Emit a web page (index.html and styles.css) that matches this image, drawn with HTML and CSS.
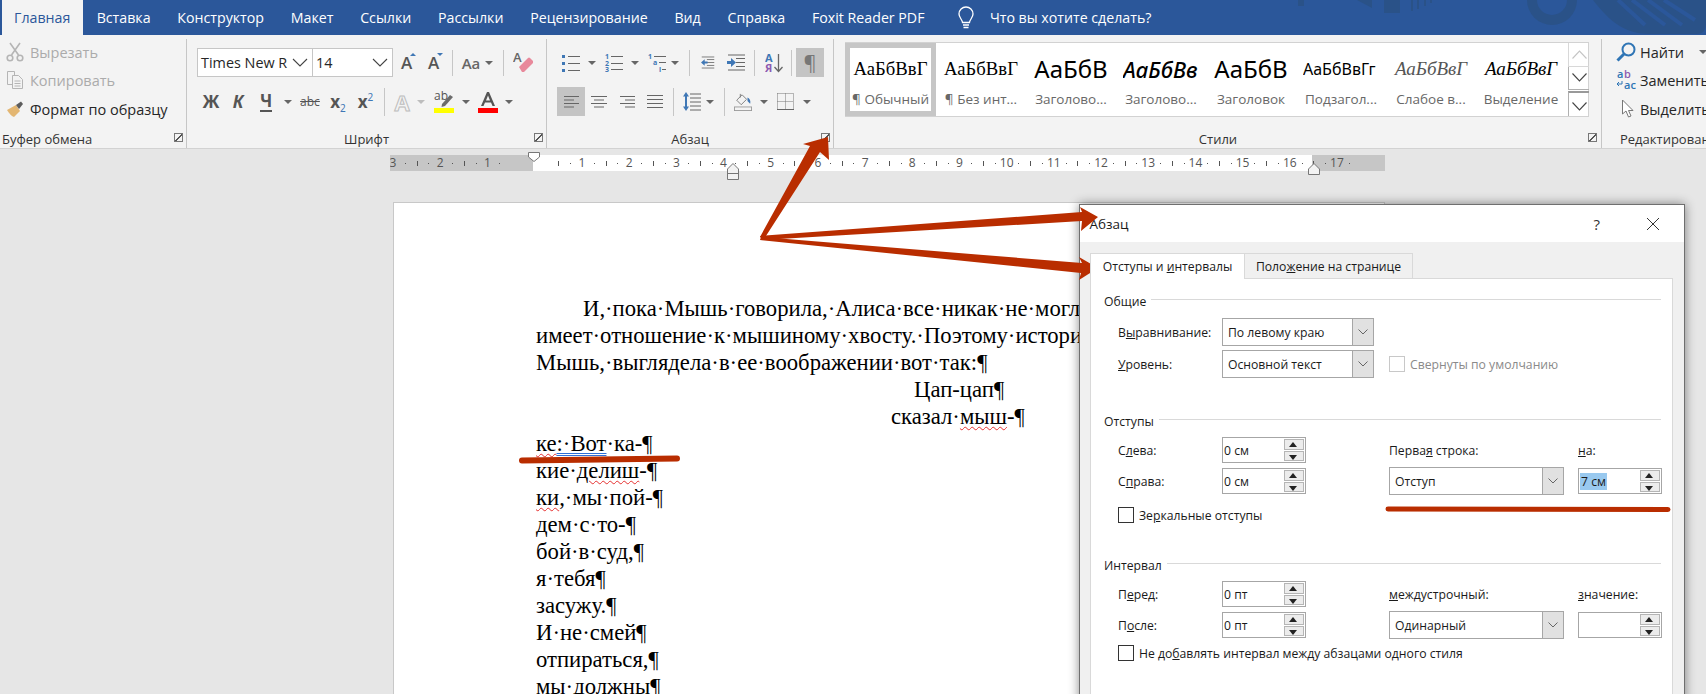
FILE: index.html
```html
<!DOCTYPE html>
<html lang="ru">
<head>
<meta charset="utf-8">
<title>Абзац</title>
<link rel="stylesheet" href="styles.css">
</head>
<body>
<header class="titlebar">
  <svg class="decor" width="416" height="35" viewBox="1290 0 416 35">
    <g fill="#2a5288">
      <rect x="1298" y="0" width="6" height="6"/>
      <path d="M1357 0H1372V8Z"/>
      <rect x="1384" y="0" width="16" height="13"/>
      <rect x="1411" y="0" width="2" height="11"/><rect x="1417" y="0" width="2" height="9"/><rect x="1424" y="0" width="2" height="6"/><rect x="1430" y="0" width="2" height="3"/>
      <path d="M1527 0A25 25 0 0 0 1577 0H1567A15 15 0 0 1 1537 0Z"/>
      <path d="M1593 0C1610 22 1625 34 1650 34H1696Q1706 34 1706 24V0Z"/>
    </g>
    <g stroke="#2b579a" stroke-width="4" fill="none">
      <path d="M1618 0L1645 25"/><path d="M1632 0L1665 25"/><path d="M1648 0L1682 25"/><path d="M1664 0L1695 20"/>
    </g>
  </svg>
  <a class="tab tab-active">Главная</a>
  <a class="tab">Вставка</a>
  <a class="tab">Конструктор</a>
  <a class="tab">Макет</a>
  <a class="tab">Ссылки</a>
  <a class="tab">Рассылки</a>
  <a class="tab">Рецензирование</a>
  <a class="tab">Вид</a>
  <a class="tab">Справка</a>
  <a class="tab">Foxit Reader PDF</a>
  <span class="tell">
    <svg width="18" height="24" viewBox="0 0 18 24" fill="none" stroke="#fff" stroke-width="1.3"><path d="M5.5 16.5C5 13 2 11.5 2 8A7 7 0 0 1 16 8C16 11.5 13 13 12.5 16.5Z"/><path d="M6 19H12M6.5 21.5H11.5"/></svg>
    <span>Что вы хотите сделать?</span>
  </span>
</header>

<section class="ribbon">
  <div class="group g-clip">
    <div class="g-body clip-list">
      <div class="clip-row off">
        <svg class="clip-ic" width="18" height="20" viewBox="0 0 18 20" fill="none" stroke="#b5b5b5" stroke-width="1.6"><path d="M4 1L12.5 13M14 1L5.5 13"/><circle cx="4" cy="16" r="2.8"/><circle cx="14" cy="16" r="2.8"/></svg>
        <span>Вырезать</span>
      </div>
      <div class="clip-row off">
        <svg class="clip-ic" width="18" height="20" viewBox="0 0 18 20" fill="#f3f3f3" stroke="#b5b5b5" stroke-width="1"><path d="M1.5 1.5H8.5V14.5H1.5Z"/><path d="M6.5 5.5H12.5L16.5 9.5V18.5H6.5Z"/><path d="M8.5 11H14.5M8.5 13.5H14.5M8.5 16H14.5"/></svg>
        <span>Копировать</span>
      </div>
      <div class="clip-row">
        <svg class="clip-ic" width="18" height="20" viewBox="0 0 18 20"><path d="M1 11L10 6L14 12L8 18C5 17 3 14 1 11Z" fill="#e3b672"/><path d="M10 6L15 2.500L17 5L13 10Z" fill="#5c5c5c"/></svg>
        <span>Формат по образцу</span>
      </div>
    </div>
    <div class="g-foot left"><span>Буфер обмена</span><i class="launch"></i></div>
  </div>

  <div class="group g-font">
    <div class="g-body">
      <div class="tools font-r1">
        <span class="rcombo"><span>Times New R</span><svg width="16" height="9" viewBox="0 0 16 9" fill="none" stroke="#444" stroke-width="1.1"><path d="M1 1L8 8L15 1"/></svg></span>
        <span class="rcombo rcombo-b"><span>14</span><svg width="16" height="9" viewBox="0 0 16 9" fill="none" stroke="#444" stroke-width="1.1"><path d="M1 1L8 8L15 1"/></svg></span>
        <span class="ic a-size">A<i class="up"></i></span>
        <span class="ic a-size">A<i class="down"></i></span>
        <span class="ic"><i class="vs"></i></span>
        <span class="ic aa">Aa</span>
        <span class="ic"><i class="caret"></i></span>
        <span class="ic"><i class="vs"></i></span>
        <span class="ic">
          <svg width="20" height="22" viewBox="0 0 20 22"><text x="0" y="10" class="svg-a">A</text><path d="M6 15L15 6Q16 5 17 6L20 9Q20.500 10 20 11L11 20H9Z" fill="#e8899b"/></svg>
        </span>
      </div>
      <div class="tools font-r2">
        <span class="ic fb">Ж</span>
        <span class="ic fb fi">К</span>
        <span class="ic fb"><span class="fu">Ч</span></span>
        <span class="ic"><i class="caret"></i></span>
        <span class="ic fs">abc</span>
        <span class="ic fb"><span>x<sub class="blue-s">2</sub></span></span>
        <span class="ic fb"><span>x<sup class="blue-s">2</sup></span></span>
        <span class="ic"><i class="vs vs-s"></i></span>
        <span class="ic a-ghost">A</span>
        <span class="ic"><i class="caret caret-off"></i></span>
        <span class="ic">
          <svg width="20" height="22" viewBox="0 0 20 22"><text x="0" y="9" class="svg-ab">ab</text><path d="M8 13L16 4L19 6L11 15L7.500 16Z" fill="#6b6b6b"/><rect y="17" width="20" height="5" fill="#ffff00"/></svg>
        </span>
        <span class="ic"><i class="caret"></i></span>
        <span class="ic">
          <svg width="20" height="22" viewBox="0 0 20 22"><path d="M3 15L9 1H11L17 15H14.500L13 11.500H7L5.500 15ZM8 9.500H12L10 4.500Z" fill="#555" fill-rule="evenodd"/><rect y="17" width="20" height="5" fill="#ff0000"/></svg>
        </span>
        <span class="ic"><i class="caret"></i></span>
      </div>
    </div>
    <div class="g-foot"><span>Шрифт</span><i class="launch"></i></div>
  </div>

  <div class="group g-para">
    <div class="g-body">
      <div class="tools para-r1">
        <span class="ic"><svg width="19" height="18" viewBox="0 0 19 18"><g fill="#3f77b5"><rect x="0" y="1" width="3" height="3"/><rect x="0" y="8" width="3" height="3"/><rect x="0" y="15" width="3" height="3"/></g><path d="M6 2.500H18M6 9.500H18M6 16.500H18" stroke="#666" stroke-width="1.200"/></svg></span>
        <span class="ic"><i class="caret"></i></span>
        <span class="ic"><svg width="19" height="18" viewBox="0 0 19 18"><g class="svg-num"><text x="0" y="5">1</text><text x="0" y="12">2</text><text x="0" y="18">3</text></g><path d="M6 2.500H18M6 9.500H18M6 15.500H18" stroke="#666" stroke-width="1.200"/></svg></span>
        <span class="ic"><i class="caret"></i></span>
        <span class="ic"><svg width="19" height="18" viewBox="0 0 19 18"><g class="svg-num"><text x="0" y="5">1</text><text x="5" y="11">a</text><text x="11" y="18">i</text></g><path d="M6 2.500H18M11 8.500H18M14 15.500H18" stroke="#666" stroke-width="1.200"/></svg></span>
        <span class="ic"><i class="caret"></i></span>
        <span class="ic"><i class="vs"></i></span>
        <span class="ic"><svg width="19" height="17" viewBox="0 0 19 17"><path d="M1 1H18M8 4.500H18M8 8.500H18M8 12.500H18M1 16H18" stroke="#666" stroke-width="1.100"/><path d="M0 8.500L5 4V7H9V10H5V13Z" fill="#3f77b5"/></svg></span>
        <span></span>
        <span class="ic"><svg width="19" height="17" viewBox="0 0 19 17"><path d="M1 1H18M9 4.500H18M9 8.500H18M9 12.500H18M1 16H18" stroke="#666" stroke-width="1.100"/><path d="M9 8.500L4 4V7H0V10H4V13Z" fill="#3f77b5"/></svg></span>
        <span class="ic"><i class="vs"></i></span>
        <span class="ic sort"><svg width="18" height="20" viewBox="0 0 18 20"><text x="0" y="9" class="svg-sa">А</text><text x="0" y="19" class="svg-sb">Я</text><path d="M13.500 1V18M9.500 14L13.500 18.500L17.500 14" stroke="#666" stroke-width="1.300" fill="none"/></svg></span>
        <span class="ic"><i class="vs"></i></span>
        <span></span>
        <span class="ic on pil">¶</span>
      </div>
      <div class="tools para-r2">
        <span class="ic on"><svg width="15" height="12" viewBox="0 0 15 12"><path d="M0 .5H15M0 4H10M0 7.500H15M0 11H10" stroke="#666"/></svg></span>
        <span class="ic"><svg width="16" height="12" viewBox="0 0 16 12"><path d="M0 .5H16M3 4H13M0 7.500H16M3 11H13" stroke="#666"/></svg></span>
        <span class="ic"><svg width="15" height="12" viewBox="0 0 15 12"><path d="M0 .5H15M5 4H15M0 7.500H15M5 11H15" stroke="#666"/></svg></span>
        <span class="ic"><svg width="16" height="13" viewBox="0 0 16 13"><path d="M0 .5H16M0 4.500H16M0 8.500H16M0 12.500H16" stroke="#666"/></svg></span>
        <span class="ic"><i class="vs vs-s"></i></span>
        <span class="ic"><svg width="18" height="19" viewBox="0 0 18 19"><path d="M7 2H18M7 6H18M7 10H18M7 14H18M7 18H18" stroke="#666"/><path d="M3 0L6 4.500H4V14.500H6L3 19L0 14.500H2V4.500H0Z" fill="#3f77b5"/></svg></span>
        <span class="ic"><i class="caret"></i></span>
        <span class="ic"><i class="vs vs-s"></i></span>
        <span class="ic"><svg width="20" height="20" viewBox="0 0 20 20" fill="none"><path d="M3 8L9 2L14 7L8 13Z" stroke="#777" stroke-width="1"/><path d="M7 1V5" stroke="#777"/><path d="M15 5Q19 7 18 12Q16 10 15 9" fill="#3f77b5"/><rect x=".5" y="15.500" width="19" height="4" stroke="#999"/></svg></span>
        <span class="ic"><i class="caret"></i></span>
        <span class="ic"><svg width="17" height="17" viewBox="0 0 17 17" fill="none"><path d="M.5 .5H16.500V16.500M.5 .5V16.500M8.500 .5V16.500M.5 8.500H16.500" stroke="#777" stroke-dasharray="1 1"/><path d="M0 16.500H17" stroke="#666"/></svg></span>
        <span class="ic"><i class="caret"></i></span>
      </div>
    </div>
    <div class="g-foot"><span>Абзац</span><i class="launch"></i></div>
  </div>

  <div class="group g-styles">
    <div class="g-body">
      <div class="gallery">
        <div class="st st-sel"><span class="pv serif">АаБбВвГ</span><span class="lb">¶ Обычный</span></div>
        <div class="st"><span class="pv serif">АаБбВвГ</span><span class="lb">¶ Без инт...</span></div>
        <div class="st"><span class="pv big">АаБбВ</span><span class="lb">Заголово...</span></div>
        <div class="st"><span class="pv h2i">АаБбВв</span><span class="lb">Заголово...</span></div>
        <div class="st"><span class="pv big">АаБбВ</span><span class="lb">Заголовок</span></div>
        <div class="st"><span class="pv sub">АаБбВвГг</span><span class="lb">Подзагол...</span></div>
        <div class="st"><span class="pv em-l">АаБбВвГ</span><span class="lb">Слабое в...</span></div>
        <div class="st"><span class="pv em-d">АаБбВвГ</span><span class="lb">Выделение</span></div>
        <div class="scroller">
          <span class="sc sc-off"><svg width="15" height="9" viewBox="0 0 15 9" fill="none" stroke="#c4c4c4" stroke-width="1.100"><path d="M.5 8.500L7.500 1L14.500 8.500"/></svg></span>
          <span class="sc"><svg width="15" height="9" viewBox="0 0 15 9" fill="none" stroke="#444" stroke-width="1.100"><path d="M.5 .5L7.500 8L14.500 .5"/></svg></span>
          <span class="sc sc-more"><svg width="15" height="9" viewBox="0 0 15 9" fill="none" stroke="#444" stroke-width="1.100"><path d="M.5 .5L7.500 8L14.500 .5"/></svg></span>
        </div>
      </div>
    </div>
    <div class="g-foot"><span>Стили</span><i class="launch"></i></div>
  </div>

  <div class="group g-edit">
    <div class="g-body clip-list edit-list">
      <div class="clip-row">
        <svg class="ed-ic" width="20" height="20" viewBox="0 0 20 20" fill="none" stroke="#2f75b5"><circle cx="12.500" cy="7.500" r="6" stroke-width="2"/><path d="M8 12L1.500 18.500" stroke-width="3"/></svg>
        <span>Найти</span><i class="caret ed-caret"></i>
      </div>
      <div class="clip-row">
        <svg class="ed-ic" width="20" height="20" viewBox="0 0 20 20"><text x="1" y="8" class="svg-e1">a</text><text x="8" y="8" class="svg-e2">b</text><text x="8" y="19" class="svg-e3">ac</text><path d="M6 11V14H1M3 12L1 14L3 16" fill="none" stroke="#2f75b5"/></svg>
        <span>Заменить</span>
      </div>
      <div class="clip-row">
        <svg class="ed-ic" width="20" height="20" viewBox="0 0 20 20" fill="#fff" stroke="#777"><path d="M6.500 1V15L10 12L12.500 18L15 17L12.500 11.500H17Z"/></svg>
        <span>Выделить</span>
      </div>
    </div>
    <div class="g-foot left"><span>Редактирование</span></div>
  </div>
</section>

<div class="ruler">
  <div class="r-side r-left">
    <span class="cm">3</span><span class="cm">2</span><span class="cm">1</span>
  </div>
  <div class="r-main">
    <span class="cm">1</span><span class="cm">2</span><span class="cm">3</span><span class="cm">4</span><span class="cm">5</span><span class="cm">6</span><span class="cm">7</span><span class="cm">8</span><span class="cm">9</span><span class="cm">10</span><span class="cm">11</span><span class="cm">12</span><span class="cm">13</span><span class="cm">14</span><span class="cm">15</span><span class="cm">16</span>
  </div>
  <div class="r-side r-right"><span class="cm">17</span></div>
  <svg class="mk mk-top" width="12" height="10" viewBox="0 0 12 10"><path d="M.5 .5H11.500V5L6 9.500L.5 5Z" fill="#fff" stroke="#777"/></svg>
  <svg class="mk mk-first" width="12" height="17" viewBox="0 0 12 17"><path d="M6 .5L11.500 6V16.500H.5V6ZM.5 10.500H11.500" fill="#f3f3f3" stroke="#777"/></svg>
  <svg class="mk mk-right" width="12" height="12" viewBox="0 0 12 12"><path d="M6 .5L11.500 6V11.500H.5V6Z" fill="#f3f3f3" stroke="#777"/></svg>
</div>

<main class="page">
  <p class="line ind0">И,·пока·Мышь·говорила,·Алиса·все·никак·не·могла</p>
  <p class="line">имеет·отношение·к·мышиному·хвосту.·Поэтому·история</p>
  <p class="line">Мышь,·выглядела·в·ее·воображении·вот·так:<b class="pm">¶</b></p>
  <p class="line ind1">Цап-цап<b class="pm">¶</b></p>
  <p class="line ind2">сказал·<span class="sq">мыш</span>-<b class="pm">¶</b></p>
  <p class="line"><span class="sq">ке</span><span class="dbl">:·Вот</span>·ка-<b class="pm">¶</b></p>
  <p class="line">кие·<span class="sq">делиш</span>-<b class="pm">¶</b></p>
  <p class="line"><span class="sq">ки</span>,·мы·пой-<b class="pm">¶</b></p>
  <p class="line">дем·с·то-<b class="pm">¶</b></p>
  <p class="line">бой·в·суд,<b class="pm">¶</b></p>
  <p class="line">я·тебя<b class="pm">¶</b></p>
  <p class="line">засужу.<b class="pm">¶</b></p>
  <p class="line">И·не·смей<b class="pm">¶</b></p>
  <p class="line">отпираться,<b class="pm">¶</b></p>
  <p class="line">мы·должны<b class="pm">¶</b></p>
</main>

<aside class="dialog">
  <div class="dlg-title">
    <span>Абзац</span>
    <span class="dlg-help">?</span>
    <svg class="dlg-x" width="14" height="14" viewBox="0 0 14 14" fill="none" stroke="#333" stroke-width="1"><path d="M1 1L13 13M13 1L1 13"/></svg>
  </div>
  <div class="dlg-body">
    <div class="dlg-tabs">
      <span class="dt dt-on"><span>Отступы и <u>и</u>нтервалы</span></span>
      <span class="dt"><span>Поло<u>ж</u>ение на странице</span></span>
    </div>
    <div class="panel">
      <div class="sec s1"><span>Общие</span><i></i></div>
      <div class="row r-gen"><label class="lab">В<u>ы</u>равнивание:</label><span class="combo cw1"><span>По левому краю</span><b class="cbtn"><svg width="10" height="6" viewBox="0 0 10 6" fill="none" stroke="#666"><path d="M.5 .5L5 5L9.500 .5"/></svg></b></span></div>
      <div class="row r-gen r-gen2"><label class="lab"><u>У</u>ровень:</label><span class="combo cw1"><span>Основной текст</span><b class="cbtn"><svg width="10" height="6" viewBox="0 0 10 6" fill="none" stroke="#666"><path d="M.5 .5L5 5L9.500 .5"/></svg></b></span><span class="cb cb-off"></span><span class="cb-lab dim">Свернуты по умолчанию</span></div>

      <div class="sec s2"><span>Отступы</span><i></i></div>
      <div class="grid4">
        <label class="lab">С<u>л</u>ева:</label>
        <span class="spin"><span>0 см</span><b class="spb"><i class="sp-u"></i><i class="sp-d"></i></b></span>
        <label class="lab c3">Перва<u>я</u> строка:</label>
        <label class="lab"><u>н</u>а:</label>
        <label class="lab">С<u>п</u>рава:</label>
        <span class="spin"><span>0 см</span><b class="spb"><i class="sp-u"></i><i class="sp-d"></i></b></span>
        <span class="combo c3"><span>Отступ</span><b class="cbtn"><svg width="10" height="6" viewBox="0 0 10 6" fill="none" stroke="#666"><path d="M.5 .5L5 5L9.500 .5"/></svg></b></span>
        <span class="spin"><span class="sel">7 см</span><b class="spb"><i class="sp-u"></i><i class="sp-d"></i></b></span>
      </div>
      <div class="chk c-mirror"><span class="cb"></span><span class="cb-lab">Зе<u>р</u>кальные отступы</span></div>

      <div class="sec s3"><span>Интервал</span><i></i></div>
      <div class="grid4">
        <label class="lab">П<u>е</u>ред:</label>
        <span class="spin"><span>0 пт</span><b class="spb"><i class="sp-u"></i><i class="sp-d"></i></b></span>
        <label class="lab c3"><u>м</u>еждустрочный:</label>
        <label class="lab"><u>з</u>начение:</label>
        <label class="lab">П<u>о</u>сле:</label>
        <span class="spin"><span>0 пт</span><b class="spb"><i class="sp-u"></i><i class="sp-d"></i></b></span>
        <span class="combo c3"><span>Одинарный</span><b class="cbtn"><svg width="10" height="6" viewBox="0 0 10 6" fill="none" stroke="#666"><path d="M.5 .5L5 5L9.500 .5"/></svg></b></span>
        <span class="spin"><span></span><b class="spb"><i class="sp-u"></i><i class="sp-d"></i></b></span>
      </div>
      <div class="chk c-style"><span class="cb"></span><span class="cb-lab">Не до<u>б</u>авлять интервал между абзацами одного стиля</span></div>
    </div>
  </div>
</aside>

<svg class="marks" width="1706" height="694" viewBox="0 0 1706 694">
  <g fill="#b92d00">
    <path d="M760 237L810 146L803 144L828 137L829 160L820 152L764 239Z"/>
    <path d="M760 236L1082 212L1080 207L1098 217L1081 231L1082 221L762 240Z"/>
    <path d="M761 237L1082 263L1079 257L1098 268L1079 280L1081 273L760 240Z"/>
  </g>
  <g stroke="#b92d00" stroke-linecap="round" fill="none">
    <path d="M522 460.500L677 458.500" stroke-width="6"/>
    <path d="M1388 509L1668 509.500" stroke-width="5"/>
  </g>
</svg>
</body>
</html>
```

FILE: styles.css
```css
* { box-sizing: border-box; }
html, body { margin: 0; padding: 0; }
body {
  position: relative;
  width: 1706px;
  height: 694px;
  overflow: hidden;
  background: #e6e6e6;
  font-family: "Open Sans", "Noto Sans", sans-serif;
  font-size: 13px;
  color: #262626;
}

/* title bar */
.titlebar {
  position: relative;
  display: flex;
  align-items: center;
  height: 35px;
  padding-left: 2px;
  background: #2b579a;
  color: #fff;
  font-size: 14.2px;
}
.decor { position: absolute; top: 0; right: 0; }
.tab {
  display: flex;
  align-items: center;
  height: 35px;
  padding: 0 13.4px;
  white-space: nowrap;
}
.tab-active { background: #f3f3f3; color: #2b579a; padding: 0 13px 0 12px; }
.tell { display: flex; align-items: center; gap: 15px; margin-left: 19px; }

/* ribbon */
.ribbon {
  display: flex;
  height: 114px;
  background: #f3f3f3;
  border-bottom: 1px solid #d2d2d2;
}
.group {
  position: relative;
  display: flex;
  flex-direction: column;
  height: 109px;
  margin-top: 4px;
  border-right: 1px solid #c6c6c6;
}
.g-clip { width: 187px; }
.g-font { width: 360px; padding-left: 10px; }
.g-para { width: 287px; padding-left: 10px; }
.g-styles { width: 768px; padding-left: 11px; }
.g-edit { width: 104px; border-right: 0; }
.g-body { flex: 1; min-height: 0; }
.g-foot {
  position: relative;
  display: flex;
  justify-content: center;
  align-items: center;
  height: 18px;
  margin-left: -10px;
  font-size: 13px;
  color: #333;
}
.g-foot.left { justify-content: flex-start; margin-left: 0; padding-left: 2px; white-space: nowrap; }
.g-edit .g-foot.left { padding-left: 18px; }
.launch {
  position: absolute;
  right: 3px;
  top: 3px;
  width: 9px;
  height: 9px;
  border: 1px solid #777;
  background: linear-gradient(135deg, transparent 46%, #555 46%, #555 58%, transparent 58%);
}
.g-styles .launch { right: 4px; }

.clip-list { display: flex; flex-direction: column; padding: 0 0 0 6px; }
.clip-row {
  display: flex;
  align-items: center;
  gap: 6px;
  height: 28px;
  margin-top: -1px;
  font-size: 14.5px;
  white-space: nowrap;
}
.clip-row:nth-child(2) { margin-top: 0; }
.clip-row:nth-child(3) { margin-top: 1px; }
.clip-ic { flex: none; }
.off { color: #ababab; }
.edit-list { padding-left: 14px; }
.edit-list .clip-row { gap: 4px; }
.ed-ic { flex: none; margin-left: 0; }
.ed-caret { margin-left: 11px; }

.tools { display: grid; align-items: center; }
.font-r1 { grid-template-columns: 116px 80px 27px 27px 11px 26px 10px 19px 20px; height: 29px; margin-top: 9px; }
.font-r2 { grid-template-columns: 28px 26px 30px 14px 30px 26px 29px 8px 28px 10px 36px 7px 37px 6px; height: 29px; margin-top: 10px; }
.para-r1 { grid-template-columns: 28px 14px 30px 12px 32px 4px 24px 14px 7px 28px 8px 31px 4px 3px 28px; height: 29px; margin-top: 9px; }
.para-r2 { grid-template-columns: 28px 28px 28px 28px 8px 29px 8px 20px 18px 24px 19px 24px; height: 29px; margin-top: 10px; }

.ic {
  position: relative;
  display: flex;
  align-items: center;
  justify-content: center;
  height: 29px;
  min-width: 0;
  color: #555;
}
.vs { display: block; flex: none; width: 1px; height: 26px; background: #c6c6c6; }
.vs-s { height: 28px; }
.caret {
  display: block;
  flex: none;
  width: 0;
  height: 0;
  border: 4px solid transparent;
  border-top-color: #666;
  border-bottom: 0;
}
.caret-off { border-top-color: #bdbdbd; }
.on { background: #c4c4c4; }
.pil { font-size: 20px; color: #777; }

.rcombo {
  display: flex;
  align-items: center;
  justify-content: space-between;
  height: 29px;
  padding: 0 4px 0 3px;
  background: #fff;
  border: 1px solid #c6c6c6;
  font-size: 14.4px;
  color: #262626;
  white-space: nowrap;
  overflow: hidden;
}
.rcombo-b { border-left: 0; }
.a-size { font-size: 17px; font-weight: 600; }
.up, .down { position: absolute; top: 5px; left: 17px; width: 0; height: 0; border: 3.5px solid transparent; }
.up { border-bottom-color: #3f77b5; border-top: 0; }
.down { border-top-color: #3f77b5; border-bottom: 0; }
.aa { font-size: 15px; font-weight: 600; color: #666; }
.fb { font-size: 17px; font-weight: 700; font-family: "Noto Sans", sans-serif; }
.fi { font-style: italic; }
.fu { border-bottom: 2px solid #555; line-height: 18px; }
.fs { font-size: 12px; text-decoration: line-through; }
.blue-s { font-size: 10px; font-weight: 400; color: #3f77b5; line-height: 0; }
.a-ghost {
  font-size: 22px;
  font-weight: 700;
  color: #f3f3f3;
  -webkit-text-stroke: 1px #bdbdbd;
}
.svg-a { font: 600 13px "Open Sans", sans-serif; fill: #666; }
.svg-ab { font: 400 12px "Open Sans", sans-serif; fill: #555; }
.svg-num text { font: 700 7px "Open Sans", sans-serif; fill: #3f77b5; }
.svg-sa { font: 700 11px "Open Sans", sans-serif; fill: #3f77b5; }
.svg-sb { font: 700 11px "Open Sans", sans-serif; fill: #8d5bb0; }
.svg-e1, .svg-e3 { font: 600 11px "Open Sans", sans-serif; fill: #2f75b5; }
.svg-e2 { font: 600 11px "Open Sans", sans-serif; fill: #8d5bb0; }

/* style gallery */
.gallery {
  display: flex;
  width: 744px;
  height: 75px;
  margin-top: 3px;
  background: #fff;
  border: 1px solid #d2d2d2;
}
.st {
  display: flex;
  flex: none;
  flex-direction: column;
  align-items: center;
  width: 90px;
  padding-top: 8px;
  overflow: hidden;
}
.st-sel { width: 91px; border: 5px solid #c6c6c6; padding-top: 3px; height: 73px; margin-left: -1px; }
.pv {
  display: block;
  height: 37px;
  line-height: 36px;
  white-space: nowrap;
  color: #000;
}
.lb { font-size: 13.5px; line-height: 22px; color: #686868; white-space: nowrap; }
.serif { font-family: "Liberation Serif", serif; font-size: 18.7px; }
.big { font-family: "Noto Sans", sans-serif; font-size: 24px; }
.h2i { font-family: "Noto Sans", sans-serif; font-size: 22px; font-style: italic; font-weight: 500; width: 76px; overflow: hidden; }
.sub { font-family: "Noto Sans", sans-serif; font-size: 16px; width: 76px; overflow: hidden; }
.em-l { font-family: "Liberation Serif", serif; font-size: 19px; font-style: italic; color: #555; }
.em-d { font-family: "Liberation Serif", serif; font-size: 19px; font-style: italic; }
.scroller { display: flex; flex-direction: column; flex: none; width: 21px; margin-left: 2px; }
.sc {
  display: flex;
  align-items: center;
  justify-content: center;
  height: 24px;
  border: 1px solid #b0b0b0;
  border-width: 0 0 1px 1px;
}
.sc-off { border-color: #d8d8d8; }
.sc-more { height: 25px; border-top: 2px solid #999; border-bottom: 0; margin-top: 1px; padding-top: 3px; }

/* ruler */
.ruler {
  position: relative;
  display: flex;
  width: 995px;
  height: 16px;
  margin: 6px 0 0 390px;
  background: #c6c6c6;
  font-size: 12px;
  color: #555;
  line-height: 16px;
}
.r-side { flex: none; display: flex; background: #c6c6c6; overflow: hidden; }
.r-left { width: 143px; }
.r-left .cm:first-child { margin-left: -20.6px; }
.r-main { flex: none; display: flex; width: 779px; padding-left: 25.4px; background: #fff; overflow: hidden; }
.r-right { width: 73px; padding-left: 1.4px; }
.cm {
  flex: none;
  width: 47.2px;
  text-align: center;
  background:
    linear-gradient(#555, #555) 11.8px 8px / 1px 1px no-repeat,
    linear-gradient(#555, #555) 35.4px 8px / 1px 1px no-repeat,
    linear-gradient(#555, #555) 0 6px / 1px 5px no-repeat;
}
.mk { position: absolute; }
.mk-top { left: 138px; top: -3px; }
.mk-first { left: 337px; top: 8px; }
.mk-right { left: 918px; top: 8px; }

/* page */
.page {
  width: 992px;
  height: 520px;
  margin: 31px 0 0 393px;
  padding: 92px 0 0 142px;
  background: #fff;
  border: 1px solid #c8c8c8;
  border-bottom: 0;
  font-family: "Liberation Serif", serif;
  font-size: 22.7px;
  color: #000;
}
.line { margin: 0; height: 27px; line-height: 27px; white-space: nowrap; }
.ind0 { padding-left: 47px; }
.ind1 { padding-left: 378px; }
.ind2 { padding-left: 355px; }
.pm { font-weight: 400; }
.sq { text-decoration: underline wavy #e53030 1px; text-underline-offset: 2px; }
.dbl { text-decoration: underline double #2e6fd8 1px; text-underline-offset: 2px; }

/* dialog */
.dialog {
  position: absolute;
  left: 1079px;
  top: 204px;
  width: 606px;
  height: 500px;
  background: #f0f0f0;
  border: 1px solid #6f6f6f;
  box-shadow: 0 0 10px rgba(0, 0, 0, .45);
  font-size: 12.2px;
  color: #1a1a1a;
}
.dlg-title {
  display: flex;
  align-items: center;
  height: 37px;
  padding-left: 9.500px;
  background: #fff;
  font-size: 13.5px;
}
.dlg-help { margin-left: auto; margin-right: 46px; font-size: 15px; color: #333; }
.dlg-x { margin-right: 24px; }
.dlg-body { padding: 10px 11px 0 10px; }
.dlg-tabs { display: flex; align-items: flex-end; height: 26px; }
.dt {
  display: flex;
  align-items: center;
  justify-content: center;
  width: 168px;
  height: 25px;
  background: #f0f0f0;
  border: 1px solid #d9d9d9;
  border-bottom: 0;
  border-left: 0;
}
.dt-on {
  width: 155px;
  height: 26px;
  background: #fff;
  border-left: 1px solid #d9d9d9;
  margin-bottom: -1px;
  position: relative;
  z-index: 1;
}
.panel {
  height: 420px;
  padding: 0 11px 0 13px;
  background: #fff;
  border: 1px solid #d9d9d9;
}
.sec { display: flex; align-items: center; height: 20px; }
.sec i { flex: 1; height: 1px; margin: -4px 0 0 5px; background: #d9d9d9; }
.s1 { margin-top: 12px; }
.s2 { margin-top: 33px; }
.s3 { margin-top: 32px; }
.row { display: flex; align-items: center; padding-left: 14px; margin-top: 7px; height: 28px; }
.r-gen2 { margin-top: 4px; }
.r-gen .lab { width: 104px; }
.lab { white-space: nowrap; }
.combo {
  display: flex;
  align-items: center;
  justify-content: space-between;
  height: 28px;
  padding-left: 5px;
  background: #fff;
  border: 1px solid #a6a6a6;
  white-space: nowrap;
}
.cw1 { width: 152px; }
.cbtn {
  display: flex;
  align-items: center;
  justify-content: center;
  align-self: stretch;
  width: 21px;
  background: #e1e1e1;
  border-left: 1px solid #a6a6a6;
}
.cb {
  display: block;
  flex: none;
  width: 16px;
  height: 16px;
  background: #fff;
  border: 1px solid #333;
}
.cb-off { margin-left: 15px; border-color: #c8c8c8; }
.cb-lab { margin-left: 5px; white-space: nowrap; }
.dim { color: #8a8a8a; }
.grid4 {
  display: grid;
  grid-template-columns: 104px 84px 272px 84px;
  grid-auto-rows: 26px;
  row-gap: 5px;
  align-items: center;
  padding-left: 14px;
  margin-top: 6px;
}
.grid4 .c3 { margin-left: 83px; }
.grid4 .combo { width: 175px; margin-top: -1px; margin-bottom: -1px; }
.spin {
  display: flex;
  align-items: center;
  justify-content: space-between;
  height: 26px;
  padding-left: 1px;
  background: #fff;
  border: 1px solid #a6a6a6;
}
.sel { background: #99c9ef; padding: 0 1px; line-height: 17px; }
.spb {
  display: flex;
  flex-direction: column;
  align-self: stretch;
  gap: 1px;
  width: 20px;
  margin: 1px 1px 1px 0;
}
.sp-u, .sp-d {
  flex: 1;
  background-color: #ececec;
  border: 1px solid #b5b5b5;
  position: relative;
}
.sp-u::after, .sp-d::after {
  content: "";
  position: absolute;
  left: 4px;
  width: 0;
  height: 0;
  border: 4px solid transparent;
}
.sp-u::after { top: 2px; border-bottom: 5px solid #222; border-top: 0; }
.sp-d::after { top: 3px; border-top: 5px solid #222; border-bottom: 0; }
.chk { display: flex; align-items: center; padding-left: 14px; height: 16px; }
.c-mirror { margin-top: 13px; }
.c-style { margin-top: 7px; }

.marks { position: absolute; left: 0; top: 0; pointer-events: none; }
```
